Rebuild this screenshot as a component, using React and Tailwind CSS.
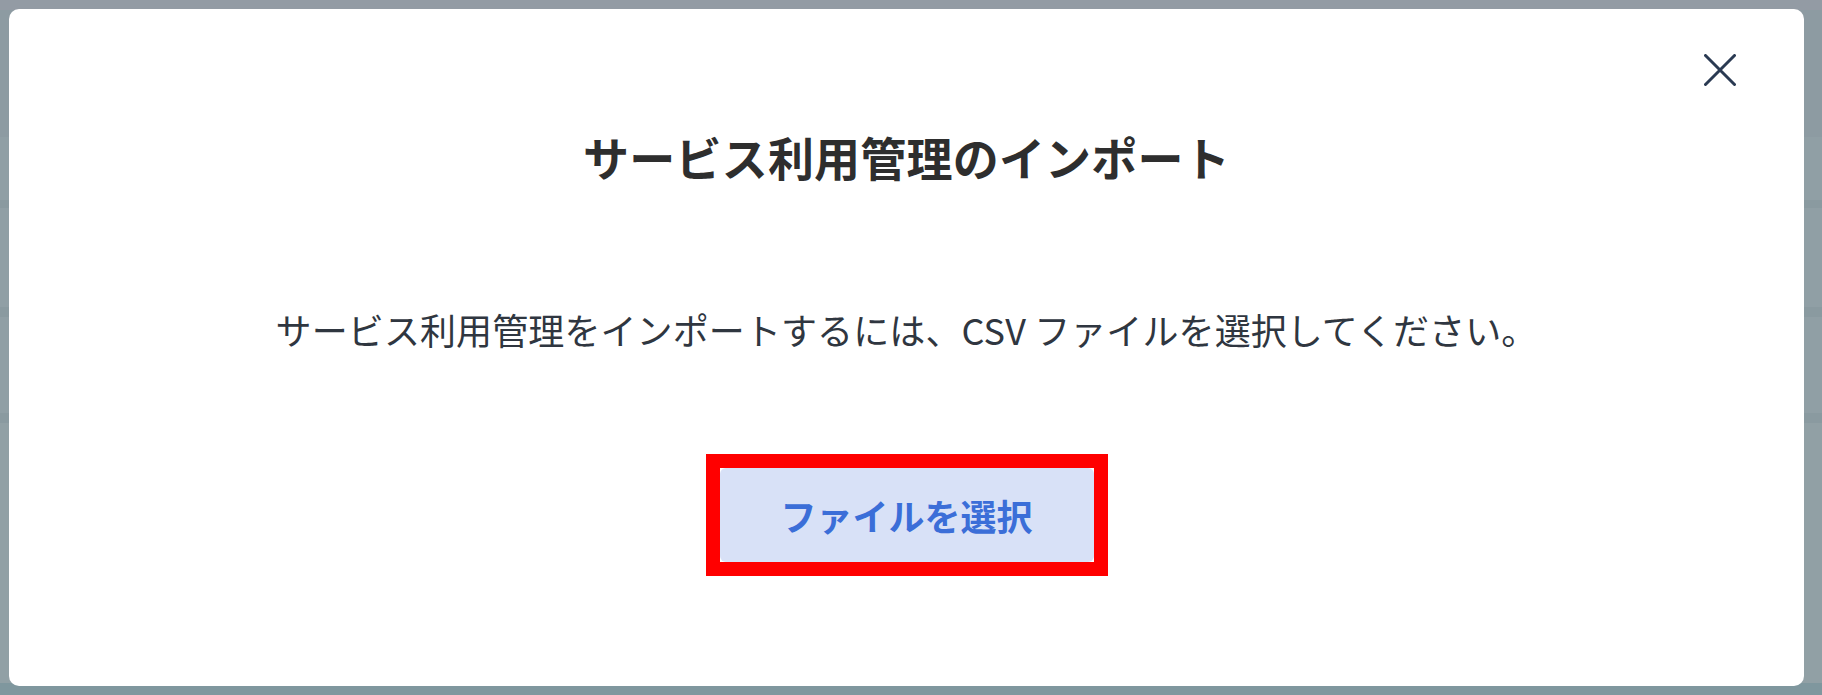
import React from 'react';

// Backdrop bands: the page behind the modal, seen through a grey overlay
const bands = [
  { h: 'h-[10px]', bg: 'bg-[#939ba4]' },
  { h: 'h-[127px]', bg: 'bg-[#8d9ba2]' },
  { h: 'h-[63px]', bg: 'bg-[#909fa5]' },
  { h: 'h-[8px]', bg: 'bg-[#8a9aa0]' },
  { h: 'h-[99px]', bg: 'bg-[#909fa5]' },
  { h: 'h-[10px]', bg: 'bg-[#8a9aa0]' },
  { h: 'h-[96px]', bg: 'bg-[#909fa5]' },
  { h: 'h-[10px]', bg: 'bg-[#8a9aa0]' },
  { h: 'h-[260px]', bg: 'bg-[#91a0a5]' },
  { h: 'h-[12px]', bg: 'bg-[#7f979e]' },
];

const CloseIcon = () => (
  <svg width="32" height="32" viewBox="0 0 32 32" fill="none">
    <path d="M1.5 1.5 L30.5 30.5 M30.5 1.5 L1.5 30.5" stroke="#2a3a52" strokeWidth="3" strokeLinecap="round" />
  </svg>
);

const App = () => {
  return (
    <div
      className="relative w-[1822px] h-[695px] overflow-hidden"
      style={{ fontFamily: '"Noto Sans CJK JP", "Noto Sans", sans-serif' }}
    >
      {/* page behind the dialog */}
      <div className="flex flex-col">
        {bands.map((b, i) => (
          <div key={i} className={`${b.h} ${b.bg}`} />
        ))}
      </div>

      {/* dialog */}
      <div className="absolute top-[9px] left-[9px] w-[1795px] h-[677px] bg-white rounded-[10px] flex flex-col items-center">
        <button className="absolute top-[45px] right-[68px] p-0">
          <CloseIcon />
        </button>

        <h2 className="mt-[113px] text-[46px] leading-[68px] font-bold text-[#2e2e2e] tracking-[0.2px]">
          サービス利用管理のインポート
        </h2>

        <p className="mt-[112px] text-[36px] leading-[54px] text-[#2f3640] tracking-[0.1px]">
          サービス利用管理をインポートするには、CSV ファイルを選択してください。
        </p>

        <div className="mt-[98px] border-[14px] border-[#ff0000] bg-white">
          <button className="w-[374px] h-[94px] rounded-md bg-[#d8e1f7] text-[36px] font-bold text-[#3b6ed8] flex items-center justify-center">
            ファイルを選択
          </button>
        </div>
      </div>
    </div>
  );
};

export default App;
